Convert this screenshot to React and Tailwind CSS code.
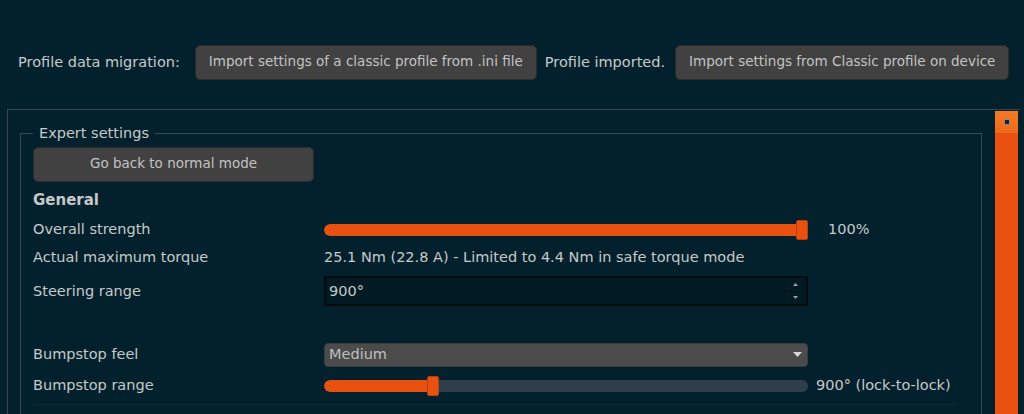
import { useState } from 'react'

const orange = 'bg-[#e8510f]'

function Slider({ value }) {
  // value in percent; handle travels over the track width minus its own width
  const left = (value / 100) * 472
  return (
    <div className="relative w-[484px] h-[24px] flex items-center">
      <div className="w-full h-[12px] rounded-full bg-[#2f3e48] overflow-hidden">
        <div className={`h-full ${orange} rounded-full`} style={{ width: left + 6 }} />
      </div>
      <div
        className={`absolute top-[2px] h-[20px] w-[12px] ${orange} border border-[#b9400c] rounded-[2px]`}
        style={{ left }}
      />
    </div>
  )
}

function Row({ label, className = '', children }) {
  return (
    <div className={`flex items-center ${className}`}>
      <div className="w-[291px] shrink-0">{label}</div>
      {children}
    </div>
  )
}

const btn = 'h-[35px] px-[13px] rounded-[5px] bg-[#414141] border border-[#2b2b2b] text-[#c3c3c3] text-[13.5px]'

export default function App() {
  const [range] = useState(900)

  return (
    <div
      className="h-[414px] w-[1024px] overflow-hidden bg-[#03212c] text-[#c6c9ca] text-[14.5px] leading-none"
      style={{ fontFamily: '"DejaVu Sans", Verdana, sans-serif' }}
    >
      {/* Profile migration bar */}
      <div className="flex items-center mt-[44px] pl-[18px] h-[35px] pt-[1px]">
        <span>Profile data migration:</span>
        <button className={`ml-[15px] ${btn}`}>
          Import settings of a classic profile from .ini file
        </button>
        <span className="ml-[8px]">Profile imported.</span>
        <button className={`ml-[10px] ${btn}`}>
          Import settings from Classic profile on device
        </button>
      </div>

      {/* Scroll area */}
      <div className="mt-[30px] ml-[7px] w-[1013px] h-[305px] border-t border-l border-[#34454b] flex">
        <div className="flex-1 pt-[16px] pl-[12px] pr-[13px]">
          <fieldset className="border border-[#3a4a50] px-[12px] pb-[6px] h-[300px]">
            <legend className="px-[6px] text-[#c6c9ca]">Expert settings</legend>
            <button className={`mt-[6px] w-[281px] ${btn} h-[34px]`}>
              Go back to normal mode
            </button>

            <div className="mt-[8px] h-[22px] flex items-center font-bold text-[15px]">General</div>

            <Row label="Overall strength" className="mt-[6px] h-[24px]">
              <Slider value={100} />
              <span className="ml-[20px]">100%</span>
            </Row>

            <Row label="Actual maximum torque" className="mt-[4px] h-[24px]">
              <span>25.1 Nm (22.8 A) - Limited to 4.4 Nm in safe torque mode</span>
            </Row>

            <Row label="Steering range" className="mt-[6px] h-[31px]">
              <div className="w-[484px] h-[30px] bg-[#021a23] border-2 border-[#050b0e] flex items-stretch">
                <span className="flex-1 flex items-center pl-[3px]">{range}°</span>
                <div className="w-[22px] flex flex-col border-l border-[#081318]">
                  <div className="flex-1 flex items-center justify-center border-b border-[#081318]">
                    <svg width="5" height="3" viewBox="0 0 5 3"><path d="M2.5 0L5 3H0z" fill="#9aa3a6" /></svg>
                  </div>
                  <div className="flex-1 flex items-center justify-center">
                    <svg width="5" height="3" viewBox="0 0 5 3"><path d="M0 0h5L2.5 3z" fill="#9aa3a6" /></svg>
                  </div>
                </div>
              </div>
            </Row>

            <Row label="Bumpstop feel" className="mt-[36px] h-[24px]">
              <div className="w-[484px] h-[24px] rounded-[4px] bg-[#4b4b4b] border border-[#3b3b3b] flex items-center pl-[4px] pr-[5px] text-[#bfbfbf]">
                <span className="flex-1">Medium</span>
                <svg width="9" height="5" viewBox="0 0 9 5"><path d="M0 0h9L4.5 5z" fill="#d8d8d8" /></svg>
              </div>
            </Row>

            <Row label="Bumpstop range" className="mt-[7px] h-[24px]">
              <Slider value={21.8} />
              <span className="ml-[8px]">900° (lock-to-lock)</span>
            </Row>

            <div className="mt-[6px] mr-[12px] border-t border-[#0b2a35]" />
          </fieldset>
        </div>

        {/* Scrollbar */}
        <div className="w-[23px] mr-[2px] mt-[1px] flex flex-col">
          <div className="h-[22px] bg-gradient-to-b from-[#f47a24] to-[#ef6a1c] flex items-center justify-center">
            <div className="w-[4px] h-[4px] bg-[#222] border border-[#8a8a8a] box-content" />
          </div>
          <div className={`flex-1 ${orange}`} />
        </div>
      </div>
    </div>
  )
}
